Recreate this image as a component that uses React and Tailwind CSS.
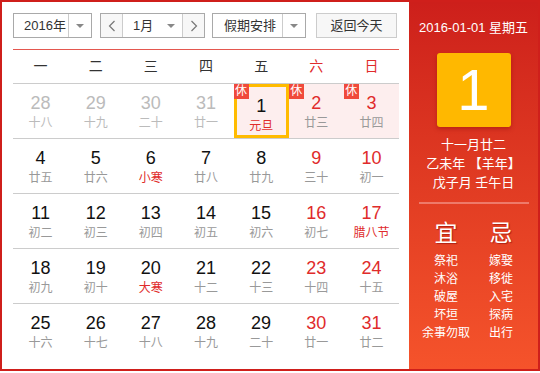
import React from "react";

const weekdays = [
  { label: "一" },
  { label: "二" },
  { label: "三" },
  { label: "四" },
  { label: "五" },
  { label: "六", red: true },
  { label: "日", red: true },
];

// d: day number, l: lunar text, other: prev month, red: weekend/holiday, lr: lunar in red
const rows = [
  [
    { d: 28, l: "十八", other: true },
    { d: 29, l: "十九", other: true },
    { d: 30, l: "二十", other: true },
    { d: 31, l: "廿一", other: true },
    { d: 1, l: "元旦", rest: true, today: true, lr: true },
    { d: 2, l: "廿三", rest: true, red: true },
    { d: 3, l: "廿四", rest: true, red: true },
  ],
  [
    { d: 4, l: "廿五" },
    { d: 5, l: "廿六" },
    { d: 6, l: "小寒", lr: true },
    { d: 7, l: "廿八" },
    { d: 8, l: "廿九" },
    { d: 9, l: "三十", red: true },
    { d: 10, l: "初一", red: true },
  ],
  [
    { d: 11, l: "初二" },
    { d: 12, l: "初三" },
    { d: 13, l: "初四" },
    { d: 14, l: "初五" },
    { d: 15, l: "初六" },
    { d: 16, l: "初七", red: true },
    { d: 17, l: "腊八节", red: true, lr: true },
  ],
  [
    { d: 18, l: "初九" },
    { d: 19, l: "初十" },
    { d: 20, l: "大寒", lr: true },
    { d: 21, l: "十二" },
    { d: 22, l: "十三" },
    { d: 23, l: "十四", red: true },
    { d: 24, l: "十五", red: true },
  ],
  [
    { d: 25, l: "十六" },
    { d: 26, l: "十七" },
    { d: 27, l: "十八" },
    { d: 28, l: "十九" },
    { d: 29, l: "二十" },
    { d: 30, l: "廿一", red: true },
    { d: 31, l: "廿二", red: true },
  ],
];

const yi = ["祭祀", "沐浴", "破屋", "坏垣", "余事勿取"];
const ji = ["嫁娶", "移徙", "入宅", "探病", "出行"];

const Arrow = () => (
  <span className="block w-0 h-0 border-l-[4px] border-r-[4px] border-t-[4px] border-l-transparent border-r-transparent border-t-[#888]" />
);

const Chevron = ({ dir }) => (
  <svg width="8" height="12" viewBox="0 0 8 12" fill="none">
    <path
      d={dir === "left" ? "M6.5 1 L1.5 6 L6.5 11" : "M1.5 1 L6.5 6 L1.5 11"}
      stroke="#777"
      strokeWidth="1.2"
    />
  </svg>
);

const DayCell = ({ cell }) => {
  let numColor = "text-[#111]";
  if (cell.other) numColor = "text-[#bbb]";
  else if (cell.red) numColor = "text-[#e02b2b]";
  const lunarColor = cell.lr ? "text-[#e02b2b]" : cell.other ? "text-[#bbb]" : "text-[#999]";

  return (
    <div
      className={`relative h-[54px] flex flex-col items-center pt-[9px] ${
        cell.rest ? "bg-[#fdeeee]" : ""
      } ${cell.today ? "border-[3px] border-[#ffbb00] pt-[6px]" : ""}`}
    >
      {cell.rest && (
        <span
          className={`absolute ${
            cell.today ? "-left-[3px] -top-[3px]" : "left-0 top-0"
          } w-[15px] h-[15px] bg-[#f04a3b] text-white text-[12px] leading-[15px] text-center`}
        >
          休
        </span>
      )}
      <span className={`text-[18px] leading-[20px] font-['Liberation_Sans'] ${numColor}`}>
        {cell.d}
      </span>
      <span className={`mt-[2px] text-[12px] leading-[16px] ${lunarColor}`}>{cell.l}</span>
    </div>
  );
};

const App = () => {
  return (
    <div className="w-[540px] h-[373px] bg-white font-['Liberation_Sans','Noto_Sans_CJK_SC',sans-serif]">
      <div className="w-[540px] h-[371px] border-2 border-[#cf1f1b] flex">
        {/* Calendar */}
        <div className="w-[407px] bg-white pl-[11px] pt-[11px] pr-[10px]">
          <div className="flex items-center h-[25px] text-[13px] text-[#333]">
            <div className="flex h-[25px] w-[79px] border border-[#a9a9a9]">
              <span className="w-[54px] pl-[10px] leading-[23px]">2016年</span>
              <span className="flex-1 border-l border-[#ccc] flex items-center justify-center">
                <Arrow />
              </span>
            </div>
            <div className="ml-[8px] flex h-[25px] w-[105px] border border-[#a9a9a9]">
              <span className="w-[22px] bg-[#f7f7f7] flex items-center justify-center border-r border-[#ccc]">
                <Chevron dir="left" />
              </span>
              <span className="w-[37px] pl-[10px] leading-[23px]">1月</span>
              <span className="w-[22px] flex items-center justify-center">
                <Arrow />
              </span>
              <span className="flex-1 bg-[#f7f7f7] flex items-center justify-center border-l border-[#ccc]">
                <Chevron dir="right" />
              </span>
            </div>
            <div className="ml-[7px] flex h-[25px] w-[94px] border border-[#a9a9a9]">
              <span className="w-[69px] pl-[11px] leading-[23px]">假期安排</span>
              <span className="flex-1 border-l border-[#ccc] flex items-center justify-center">
                <Arrow />
              </span>
            </div>
            <div className="ml-[10px] h-[25px] w-[81px] border border-[#ccc] bg-[#f7f7f7] text-center leading-[23px]">
              返回今天
            </div>
          </div>

          <div className="mt-[11px] border-t border-[#e4574f]">
            <div className="grid grid-cols-7 h-[34px] border-b border-[#ccc] text-[14px]">
              {weekdays.map((w) => (
                <div
                  key={w.label}
                  className={`flex items-center justify-center ${w.red ? "text-[#e02b2b]" : "text-[#333]"}`}
                >
                  {w.label}
                </div>
              ))}
            </div>
            {rows.map((row, i) => (
              <div
                key={i}
                className={`grid grid-cols-7 h-[55px] ${i < rows.length - 1 ? "border-b border-[#ccc]" : ""}`}
              >
                {row.map((cell, j) => (
                  <DayCell key={j} cell={cell} />
                ))}
              </div>
            ))}
          </div>
        </div>

        {/* Detail panel */}
        <div className="flex-1 bg-gradient-to-b from-[#cd1f1b] to-[#f5532b] text-white flex flex-col items-center">
          <div className="mt-[17px] text-[13px] leading-[18px]">2016-01-01 星期五</div>
          <div className="mt-[16px] w-[74px] h-[74px] rounded-[3px] bg-[#ffb800] shadow-[0_2px_4px_rgba(120,0,0,0.35)] flex items-center justify-center">
            <span className="text-[58px] leading-none font-['Liberation_Sans']">1</span>
          </div>
          <div className="mt-[8px] text-[13px] leading-[19px] text-center">
            <div>十一月廿二</div>
            <div>乙未年 【羊年】</div>
            <div>戊子月 壬午日</div>
          </div>
          <div className="mt-[10px] w-[110px] h-[2px] bg-[#ee7a6a]" />
          <div className="mt-[16px] w-[110px] grid grid-cols-2 text-center">
            <div>
              <div className="text-[23px] leading-[26px] [text-shadow:1px_1px_1px_rgba(120,0,0,0.5)]">宜</div>
              <div className="mt-[6px] text-[12px] leading-[18px]">
                {yi.map((t) => (
                  <div key={t}>{t}</div>
                ))}
              </div>
            </div>
            <div>
              <div className="text-[23px] leading-[26px] [text-shadow:1px_1px_1px_rgba(120,0,0,0.5)]">忌</div>
              <div className="mt-[6px] text-[12px] leading-[18px]">
                {ji.map((t) => (
                  <div key={t}>{t}</div>
                ))}
              </div>
            </div>
          </div>
        </div>
      </div>
    </div>
  );
};

export default App;
